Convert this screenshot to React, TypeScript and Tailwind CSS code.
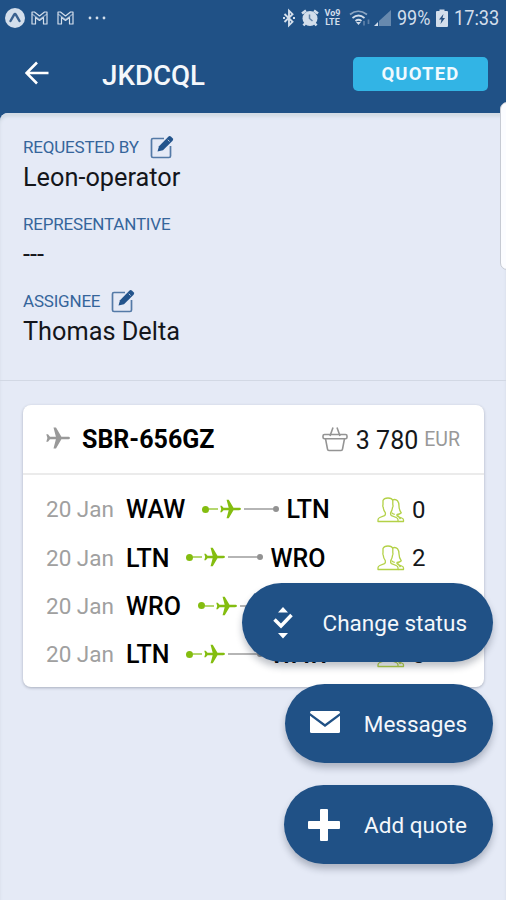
import type { ReactNode } from "react";

const Plane = ({ className }: { className?: string }) => (
  <svg viewBox="0 0 24 22" fill="currentColor" className={className}>
    <path d="M24 11c0-.8-1-1.300-2.200-1.300h-6.400L10 .5H7.500l2.400 9.200H4L2 7.200H.3L1.400 11 .3 14.800H2l2-2.500h5.900L7.500 21.500H10l5.400-9.200h6.400c1.200 0 2.200-.5 2.200-1.300Z" />
  </svg>
);

const EditIcon = () => (
  <svg viewBox="0 0 24 24" className="h-6 w-6 text-[#23548c]">
    <path
      d="M14 3.500H3Q1.500 3.500 1.500 5v16Q1.500 22.500 3 22.500h16Q20.500 22.500 20.500 21V11"
      fill="none"
      stroke="currentColor"
      strokeWidth="1.700"
      opacity=".75"
    />
    <path
      d="M7.500 16.500l1.500-5.300L18.300 1.700q1.300-1.300 2.600-.1l1.700 1.600q1.200 1.200 0 2.500L13 15.300Z"
      fill="currentColor"
    />
    <path d="M17.800 4.800l1.800 1.700" stroke="#e5eaf6" strokeWidth=".8" />
  </svg>
);

const BasketIcon = () => (
  <svg
    viewBox="0 0 26 26"
    fill="none"
    stroke="#949494"
    strokeWidth="1.600"
    strokeLinejoin="round"
    className="h-[26px] w-[26px]"
  >
    <rect x="1" y="8.500" width="24" height="4.200" rx="1.500" />
    <path d="M3.500 12.700l2 10.500q.2 1.300 1.400 1.300h12.200q1.200 0 1.400-1.300l2-10.500" />
    <path d="M8 10l3-8.500M18 10l-3-8.500" />
  </svg>
);

const PeopleIcon = () => (
  <svg
    viewBox="0 0 28 26"
    fill="none"
    stroke="#b3d147"
    strokeWidth="1.300"
    strokeLinejoin="round"
    className="h-[26px] w-7"
  >
    <path d="M1 24.500v-1.800q0-1.500 1.800-2.200l4.700-1.900q1.300-.8.800-3Q6.500 13.500 6.300 10.500 5.500 9.500 6 7.500V3.500Q7 1 11 1t4.800 2.500v4q.6 2-.3 3-.3 3-1.800 5.100-.5 2.200.8 3l4.700 1.900q1.800.7 1.800 2.200v1.800Z" />
    <path d="M15.500 3q3-1.300 5 .8 1.500 1.700 1.500 5.200 0 4 2.300 6.800-1.600 1.700-4.300 1.700-.4 1.500 1 2l3.700 1.500q1.800.7 1.800 2v1.500h-5.500M14.500 15.500q1 1.700 3.300 1.800M20 17.500l3.500 4.500" />
  </svg>
);

const MailMark = ({ className = "" }: { className?: string }) => (
  <svg
    viewBox="0 0 17 14"
    fill="none"
    stroke="currentColor"
    strokeWidth="1.200"
    strokeLinejoin="round"
    className={`h-3.5 w-[17px] ${className}`}
  >
    <path d="M1 13V1h2.500l5 4 5-4H16v12h-3.500V6.500l-4 3-4-3V13Z" />
    <path d="M1 3l7.500 5.500L16 3" opacity=".6" />
  </svg>
);

const StatusBar = () => (
  <div className="flex h-9 items-center justify-between pl-[5px] pr-[7px] text-[#d3deeb]">
    <div className="flex items-center">
      <svg viewBox="0 0 20 20" className="h-5 w-5">
        <circle cx="10" cy="10" r="10" fill="currentColor" />
        <path
          d="M5.500 13L9 6.800q1-1.500 2 0l3.500 6.200"
          fill="none"
          stroke="#3a618f"
          strokeWidth="2.400"
          strokeLinecap="round"
        />
      </svg>
      <MailMark className="ml-1.5" />
      <MailMark className="ml-[9px]" />
      <svg viewBox="0 0 18 4" fill="currentColor" className="ml-3.5 h-1 w-[18px]">
        <circle cx="2" cy="2" r="1.400" />
        <circle cx="9" cy="2" r="1.400" />
        <circle cx="16" cy="2" r="1.400" />
      </svg>
    </div>
    <div className="flex items-center">
      <svg
        viewBox="0 0 12 20"
        fill="none"
        stroke="currentColor"
        strokeWidth="1.900"
        className="h-5 w-3"
      >
        <path d="M1.500 6l8 7.800L6 17.300V2.700l3.500 3.500-8 7.800" />
        <path d="M0 10h2M10 10h2" />
      </svg>
      <svg viewBox="0 0 18 20" className="ml-1.5 h-5 w-[18px]">
        <path
          d="M1 5.500L5 2.500M17 5.500L13 2.500M4.500 15l-2 2.500M13.500 15l2 2.500"
          stroke="currentColor"
          strokeWidth="2.600"
        />
        <circle cx="9" cy="10.500" r="7.500" fill="currentColor" />
        <path d="M8.500 6.500v4l3 2.500" fill="none" stroke="#6282a5" strokeWidth="1.500" />
      </svg>
      <div className="ml-1 w-[19px] text-center text-[9px] font-bold leading-[9px]">
        <div>Vo9</div>
        <div>LTE</div>
      </div>
      <svg
        viewBox="0 0 22 20"
        fill="none"
        stroke="currentColor"
        strokeWidth="1.700"
        className="ml-[7px] h-5 w-[22px]"
      >
        <path d="M1 6.500q8-6.500 17 0" opacity=".6" />
        <path d="M3.500 10q6-5 12 0M6.500 13q3-2.500 6 0" />
        <path d="M7 14h5l-2.500 3Z" fill="currentColor" stroke="none" />
        <path d="M15 13v4.500M19.500 11.500V16" opacity=".35" />
      </svg>
      <svg viewBox="0 0 17 18" fill="currentColor" className="ml-[3px] h-[18px] w-[17px]">
        <path d="M0 17l4-4v4Z" />
        <path d="M5 17V12L17 1v16Z" opacity=".4" />
      </svg>
      <span className="ml-1.5 inline-block w-[35px] text-[20px] leading-6">
        <span className="inline-block origin-left scale-x-[.9]">99%</span>
      </span>
      <svg viewBox="0 0 12 18" className="ml-1 h-[18px] w-3">
        <path d="M3.500 2V.5h5V2H11q1 0 1 1v14q0 1-1 1H1q-1 0-1-1V3q0-1 1-1Z" fill="currentColor" />
        <path d="M7.500 5L3 10.500h2.500L4.500 15 9 9H6.500Z" fill="#285182" />
      </svg>
      <span className="ml-1.5 w-[45px] text-[20px] leading-6">
        <span className="inline-block origin-left scale-x-[.91]">17:33</span>
      </span>
    </div>
  </div>
);

const Field = ({
  label,
  value,
  editable,
}: {
  label: string;
  value: string;
  editable?: boolean;
}) => (
  <div className="h-[77px]">
    <div className="flex h-6 items-center gap-[11px]">
      <span className="text-[17px] leading-6 tracking-[-0.2px] text-[#35659b]">{label}</span>
      {editable && <EditIcon />}
    </div>
    <div className="mt-[3px] text-[25.300px] leading-8 text-[#14161b]">{value}</div>
  </div>
);

const Leg = ({ from, to, count }: { from: string; to: string; count?: number }) => (
  <div className="flex h-[48.300px] items-center">
    <span className="w-20 text-[22.500px] text-[#a0a0a0]">20 Jan</span>
    <div className="flex w-[251px] items-center whitespace-nowrap text-[25px] font-medium text-black">
      <span>{from}</span>
      <div className="ml-[17px] mr-[7px] flex w-[77px] shrink-0 -translate-y-px items-center">
        <span className="h-[7px] w-[7px] rounded-full bg-[#84bd10]" />
        <span className="h-0.5 w-[9px] bg-[#84bd10]/60" />
        <Plane className="ml-0.5 h-5 w-[21px] text-[#84bd10]" />
        <span className="ml-[3px] h-0.5 grow bg-[#b5b5b5]" />
        <span className="h-1.5 w-1.5 rounded-full bg-[#929292]" />
      </div>
      <span>{to}</span>
    </div>
    <PeopleIcon />
    <span className="ml-[7px] text-[24px] text-[#15171a]">{count}</span>
  </div>
);

const ActionButton = ({
  children,
  label,
  className,
}: {
  children: ReactNode;
  label: string;
  className: string;
}) => (
  <button
    className={`flex h-[79px] items-center justify-between rounded-full bg-[#205186] pr-[26px] text-[22.500px] text-[#f4f7fb] shadow-[0_5px_7px_rgba(20,30,50,0.27)] ${className}`}
  >
    {children}
    <span className="pt-[3px]">{label}</span>
  </button>
);

const App = () => {
  return (
    <main className="relative h-[900px] w-[506px] overflow-hidden bg-[#205186] font-[Roboto,sans-serif]">
      <StatusBar />
      <header className="flex h-[77px] items-center pl-[25px] pr-[18px]">
        <svg
          viewBox="0 0 24 24"
          fill="none"
          stroke="white"
          strokeWidth="2.600"
          className="-mt-1 h-6 w-6"
        >
          <path d="M23.500 12H2M12 1.500L1.500 12 12 22.500" />
        </svg>
        <h1 className="ml-[53px] pt-0.5 text-[27.700px] font-medium text-[#f4f7fb]">JKDCQL</h1>
        <span className="ml-auto flex h-[34px] w-[135px] -translate-y-px items-center justify-center rounded-[5px] bg-[#32b4e5] pt-0.5 text-[18.500px] font-bold tracking-[1.200px] text-[#f0faff]">
          QUOTED
        </span>
      </header>

      <div className="h-[787px] rounded-tl-lg bg-[#e5eaf6] shadow-[inset_0_4px_3px_#d3dbe5]">
        <section className="h-[268px] border-b border-[#d2d8e4] pl-[23px] pt-[22px]">
          <Field label="REQUESTED BY" value="Leon-operator" editable />
          <Field label="REPRESENTANTIVE" value="---" />
          <Field label="ASSIGNEE" value="Thomas Delta" editable />
        </section>

        <section className="ml-[23px] mt-6 h-[282px] w-[461px] rounded-lg bg-white shadow-[0_1px_3px_rgba(40,50,70,0.32)]">
          <div className="flex h-[70px] items-center border-b-2 border-[#ebebeb] pl-[23px] pr-6">
            <Plane className="-mt-0.5 h-[22px] w-6 text-[#999]" />
            <span className="ml-3 pt-0.5 text-[25px] font-bold text-black">SBR-656GZ</span>
            <div className="ml-auto flex items-center">
              <BasketIcon />
              <span className="ml-2 pt-[3px] text-[25px] text-[#15171a]">3 780</span>
              <span className="ml-1.5 pt-0.5 text-[19.500px] text-[#999]">EUR</span>
            </div>
          </div>
          <div className="pl-[23px] pt-[11px]">
            <Leg from="WAW" to="LTN" count={0} />
            <Leg from="LTN" to="WRO" count={2} />
            <Leg from="WRO" to="LTN" />
            <Leg from="LTN" to="WAW" count={0} />
          </div>
        </section>
      </div>

      {/* edge panel handle */}
      <div className="absolute right-[-8px] top-[102px] h-[168px] w-[14px] rounded-lg border border-[#c6cad3] bg-[#fbfcff]" />

      <div className="absolute bottom-9 right-[13px] flex flex-col items-end gap-[22px]">
        <ActionButton label="Change status" className="w-[251px] pl-[31px]">
          <svg viewBox="0 0 20 32" className="h-8 w-5">
            <path d="M10 0l5 5.500H5ZM5 26h10l-5 5.500Z" fill="white" />
            <path d="M1.500 12.500l6.500 6.500L18.500 8" fill="none" stroke="white" strokeWidth="3.500" />
          </svg>
        </ActionButton>
        <ActionButton label="Messages" className="w-[208px] pl-[25px]">
          <svg viewBox="0 0 30 22" className="-mt-1 h-[22px] w-[30px]">
            <path d="M0 1.500Q0 0 1.500 0h27Q30 0 30 1.500v19q0 1.500-1.500 1.500h-27Q0 22 0 20.500Z" fill="white" />
            <path d="M-1 2.500l16 12 16-12" fill="none" stroke="#205186" strokeWidth="2.200" />
          </svg>
        </ActionButton>
        <ActionButton label="Add quote" className="w-[209px] pl-6">
          <svg viewBox="0 0 32 32" fill="white" className="h-8 w-8">
            <rect x="12" width="8" height="32" rx="1" />
            <rect y="12" width="32" height="8" rx="1" />
          </svg>
        </ActionButton>
      </div>
    </main>
  );
};

export default App;
